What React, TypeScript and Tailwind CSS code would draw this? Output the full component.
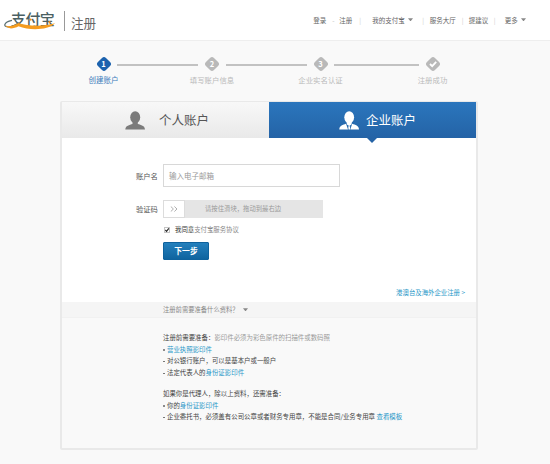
import React from "react";

const steps = [
  { label: "创建账户", mark: "1", active: true, cell: "w-[108.5px]", line: "w-[81px]" },
  { label: "填写账户信息", mark: "2", active: false, cell: "w-[108.5px]", line: "w-[81px]" },
  { label: "企业实名认证", mark: "3", active: false, cell: "w-[112px]", line: "w-[85px]" },
  { label: "注册成功", mark: "check", active: false, cell: "w-[50px]", line: "" },
];

function Caret({ className = "" }: { className?: string }) {
  return (
    <svg viewBox="0 0 6 4" className={`h-[3.5px] w-[5px] shrink-0 ${className}`}>
      <path d="M0 0.3H6L3 4Z" fill="#888" />
    </svg>
  );
}

function Logo() {
  return (
    <div className="relative h-[20px] w-[52px] shrink-0">
      <div className="absolute left-[7px] top-0 whitespace-nowrap text-[15px] font-medium leading-[15px] tracking-[-0.6px] text-[#4a5f63]">
        支付宝
      </div>
      <svg viewBox="0 0 52 20" className="absolute inset-0 h-full w-full">
        <path
          d="M8 9.3C-0.5 11-1.5 16.4 5 16C9 15.6 12 14 15 11.8"
          fill="none"
          stroke="#5b7073"
          strokeWidth="1.2"
        />
        <path
          d="M1.5 14.6C5.5 16.6 10.5 14 14.5 12C25 15.6 40 15.4 51 12.2C44 19.2 26 19.8 14.5 15.2C9.5 18 3.5 18.4 1.5 14.6Z"
          fill="#f59c1f"
        />
        <circle cx="26.5" cy="8.6" r="1.1" fill="#f08a1c" />
        <circle cx="45.5" cy="11.2" r="1.1" fill="#f08a1c" />
      </svg>
    </div>
  );
}

function Header() {
  return (
    <header className="flex h-[41px] items-start border-b border-[#eeeeee] bg-white pl-[4px]">
      <div className="flex pt-[11px]">
        <Logo />
        <div className="ml-[8px] h-[20px] w-px bg-[#999]" />
        <div className="ml-[6px] mt-[5px] whitespace-nowrap text-[12.6px] leading-[14px] text-[#666]">注册</div>
      </div>
      <nav className="ml-[217px] mt-[15.5px] flex h-[8px] items-center whitespace-nowrap text-[6.5px] leading-[8px] text-[#666]">
        <span className="w-[19px]">登录</span>
        <span className="w-[7px] text-[#bbb]">-</span>
        <span className="w-[20px]">注册</span>
        <span className="w-[13px] text-[#ccc]">|</span>
        <span className="w-[36px]">我的支付宝</span>
        <Caret />
        <span className="ml-[9px] w-[7.5px] text-[#ccc]">|</span>
        <span className="w-[32px]">服务大厅</span>
        <span className="w-[7px] text-[#ccc]">|</span>
        <span className="w-[25px]">提建议</span>
        <span className="w-[11px] text-[#ccc]">|</span>
        <span className="w-[16.5px]">更多</span>
        <Caret />
      </nav>
    </header>
  );
}

function StepMark({ mark, active }: { mark: string; active: boolean }) {
  return (
    <div className="relative flex h-[16px] w-[16px] items-center justify-center">
      <svg viewBox="0 0 16 16" className="absolute inset-0 h-full w-full">
        <rect x="2.3" y="2.3" width="11.4" height="11.4" rx="2.8" transform="rotate(45 8 8)" fill={active ? "#1c62ae" : "#b9b9b9"} />
        {mark === "check" && <path d="M5 8L7.2 10.2L11.2 5.8" fill="none" stroke="white" strokeWidth="1.8" />}
      </svg>
      {mark !== "check" && <span className="relative text-[7.5px] font-bold leading-[8px] text-white">{mark}</span>}
    </div>
  );
}

function Steps() {
  return (
    <div className="flex h-[60px] pl-[78.5px] pt-[15px]">
      {steps.map((s) => (
        <div key={s.label} className={`flex shrink-0 items-start ${s.cell}`}>
          <div className="flex w-[50px] shrink-0 flex-col items-center">
            <StepMark mark={s.mark} active={s.active} />
            <span className={s.active ? "mt-[3px] whitespace-nowrap text-[7.5px] leading-[10px] text-[#3b7bbb]" : "mt-[3px] whitespace-nowrap text-[7.4px] leading-[10px] text-[#b9b9b9]"}>
              {s.label}
            </span>
          </div>
          {s.line && <div className={`-ml-[11.5px] mt-[8px] h-[2px] shrink-0 bg-[#c2c2c2] ${s.line}`} />}
        </div>
      ))}
    </div>
  );
}

function Tabs() {
  return (
    <div className="flex h-[36px] text-[12.5px] leading-[16px]">
      <div className="flex w-[207px] items-center bg-linear-to-b from-[#f8f8f8] to-[#e9e9e9] pl-[63px] text-[#555]">
        <svg viewBox="0 0 20 19" className="h-[19px] w-[20px]" fill="#7b7b7b">
          <ellipse cx="10.2" cy="6.3" rx="5" ry="6" />
          <path d="M7.5 10H12.8V13C16 14 19.8 14.5 20 18.5H0.3C0.5 14.5 4.5 14 7.5 13Z" />
        </svg>
        <span className="ml-[14px] whitespace-nowrap">个人账户</span>
      </div>
      <div className="relative flex flex-1 items-center bg-linear-to-b from-[#2b76bd] to-[#2463a6] pl-[70px] text-white">
        <svg viewBox="0 0 20 19" className="h-[19px] w-[20px]" fill="white">
          <ellipse cx="10.2" cy="6.3" rx="4.9" ry="6" />
          <path d="M7.2 9H13.2L12.5 13.5L10.2 15L7.9 13.5Z" />
          <path d="M7 12.8L9 18.5H0.3C0.5 14.5 4 14 7 12.8Z" />
          <path d="M13.2 12.8L11.3 18.5H20C19.8 14.5 16.4 14 13.2 12.8Z" />
          <path d="M9.3 15.2H11.1L11 18.5H9.5Z" />
        </svg>
        <span className="ml-[7px] whitespace-nowrap">企业账户</span>
        <svg viewBox="0 0 12 6" className="absolute left-[97px] top-[36px] h-[5px] w-[12px]">
          <path d="M0 0H12L6 6Z" fill="#2463a6" />
        </svg>
      </div>
    </div>
  );
}

function Form() {
  return (
    <div className="h-[164px] bg-white pt-[26px]">
      <div className="flex items-center">
        <span className="w-[101px] whitespace-nowrap pl-[74px] text-[7.3px] leading-[10px] text-[#555]">账户名</span>
        <div className="flex h-[23px] w-[177px] items-center border border-[#d8d8d8] pl-[5px] text-[7.5px] leading-[10px] text-[#999]">
          输入电子邮箱
        </div>
      </div>
      <div className="mt-[13px] flex items-center">
        <span className="w-[101px] whitespace-nowrap pl-[74px] text-[7.3px] leading-[10px] text-[#555]">验证码</span>
        <div className="flex h-[18px] w-[160px] items-center bg-[#e5e5e5]">
          <div className="flex h-full w-[22px] items-center justify-center border border-[#dcdcdc] bg-white">
            <svg viewBox="0 0 8 6" className="h-[6px] w-[8px]" fill="none" stroke="#999" strokeWidth="0.8">
              <path d="M0.8 0.5L3.4 3L0.8 5.5M4.4 0.5L7 3L4.4 5.5" />
            </svg>
          </div>
          <span className="ml-[20px] whitespace-nowrap text-[6.35px] leading-[8px] text-[#999]">请按住滑块，拖动到最右边</span>
        </div>
      </div>
      <div className="ml-[102px] mt-[8px] flex h-[8px] items-center whitespace-nowrap text-[6.4px] leading-[8px] text-[#888]">
        <svg viewBox="0 0 7 7" className="mr-[5px] h-[6px] w-[6px]">
          <rect x="0.4" y="0.4" width="6.2" height="6.2" rx="0.8" fill="white" stroke="#999" strokeWidth="0.8" />
          <path d="M1.6 3.5L3 5L5.6 1.6" fill="none" stroke="#222" strokeWidth="1.3" />
        </svg>
        <span className="text-[#333]">我同意</span>支付宝服务协议
      </div>
      <button className="ml-[101px] mt-[8px] flex h-[18px] w-[46px] items-center justify-center rounded-[1px] border border-[#0f629d] bg-linear-to-b from-[#2480bd] to-[#0f649f] text-[7.8px] font-bold leading-[10px] text-white">
        下一步
      </button>
      <div className="mt-[29px] pr-[11px] text-right text-[6.4px] leading-[8px] text-[#2a98c8]">港澳台及海外企业注册&nbsp;&gt;</div>
    </div>
  );
}

function Link({ children }: { children: React.ReactNode }) {
  return <span className="text-[#2a98c8]">{children}</span>;
}

function Notes() {
  return (
    <div className="flex-1 text-[6.43px] leading-[11.7px] text-[#444]">
      <div className="flex h-[16px] items-center border-b border-[#f1f1f1] bg-[#f5f5f5] pl-[101px] text-[6.3px] text-[#888]">
        <span className="whitespace-nowrap">注册前需要准备什么资料？</span>
        <Caret className="ml-[4px]" />
      </div>
      <div className="whitespace-nowrap pl-[101px] pt-[14px]">
        <p>注册前需要准备：<span className="text-[#999]">影印件必须为彩色原件的扫描件或数码照</span></p>
        <p><Dot /><Link>营业执照影印件</Link></p>
        <p><Dot />对公银行账户，可以是基本户或一般户</p>
        <p><Dot />法定代表人的<Link>身份证影印件</Link></p>
        <p className="mt-[9px]">如果你是代理人，除以上资料，还需准备：</p>
        <p><Dot />你的<Link>身份证影印件</Link></p>
        <p><Dot />企业委托书，必须盖有公司公章或者财务专用章，不能是合同/业务专用章 <Link>查看模板</Link></p>
      </div>
    </div>
  );
}

function Dot() {
  return <span className="mr-[2.5px] inline-block h-[1.5px] w-[1.5px] rounded-full bg-[#666] align-middle" />;
}

export default function App() {
  return (
    <div className="h-[464px] w-[550px] overflow-hidden bg-[#f9f9f9] font-['Noto_Sans_CJK_SC',sans-serif]">
      <Header />
      <Steps />
      <main className="ml-[60px] flex h-[349px] w-[418px] flex-col rounded-[2px] border-2 border-t border-[#e9e9e9] bg-[#f9f9f9]">
        <Tabs />
        <Form />
        <Notes />
      </main>
    </div>
  );
}
